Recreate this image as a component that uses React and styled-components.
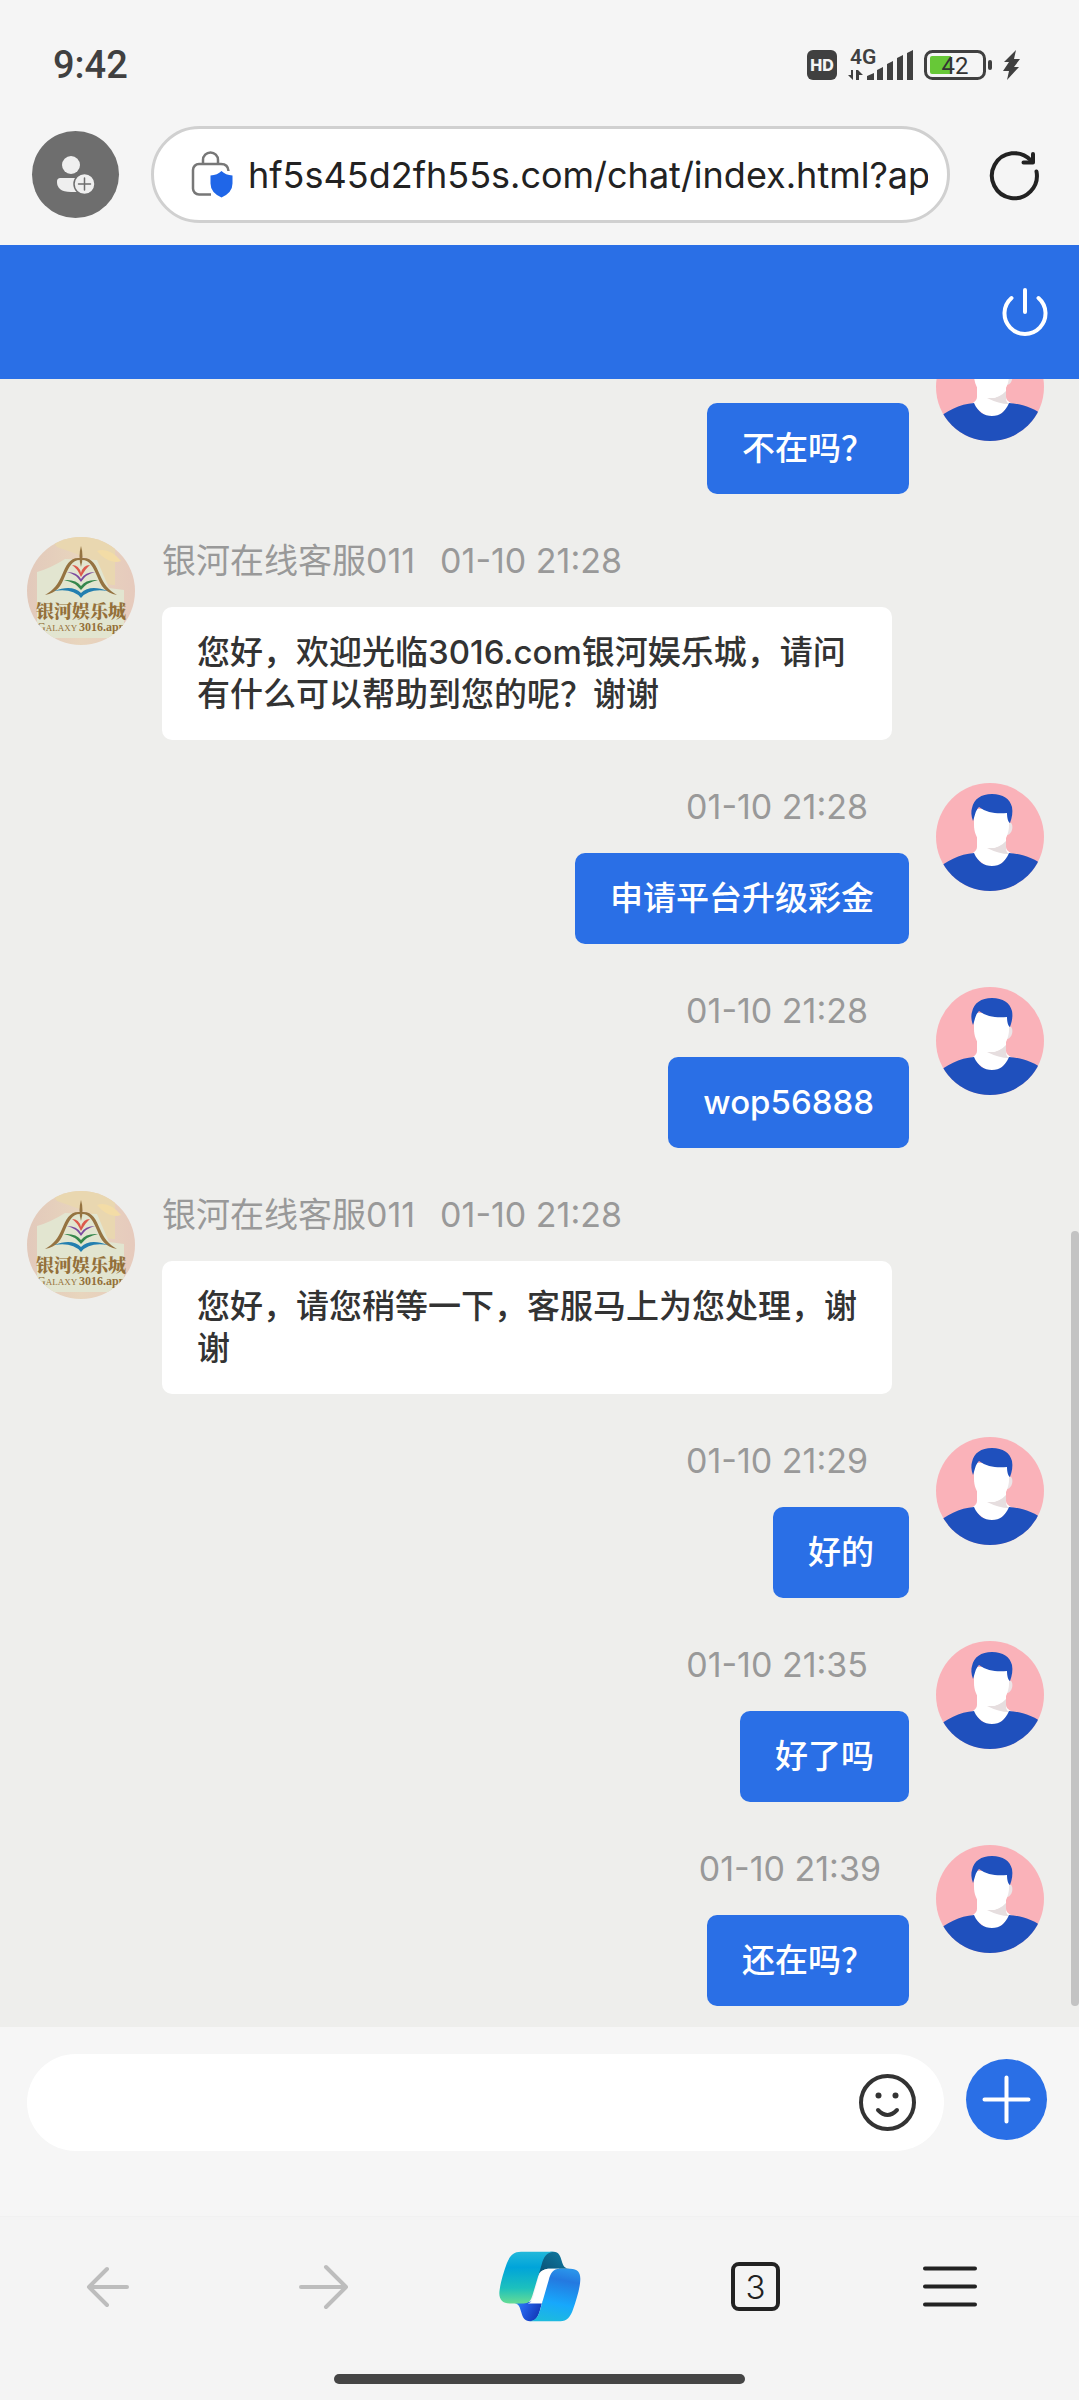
import { styled, createGlobalStyle } from 'styled-components';

const GlobalStyle = createGlobalStyle`
  * {
    box-sizing: border-box;
  }
  body {
    margin: 0;
    background-color: #f5f5f5;
    font-family: Inter, "Noto Sans CJK SC", sans-serif;
  }
  button {
    display: flex;
    align-items: center;
    justify-content: center;
    padding: 0;
    border: none;
    background: none;
    color: inherit;
    cursor: pointer;
  }
  svg {
    display: block;
    flex-shrink: 0;
    overflow: visible;
  }
`;

const Screen = styled.div`
  display: flex;
  flex-direction: column;
  height: 100vh;
`;

// ---------- phone status bar ----------
const StatusBar = styled.div`
  display: flex;
  align-items: center;
  justify-content: space-between;
  height: 126px;
  padding: 3px 59px 0 53px;
  color: #404040;
`;

const Clock = styled.time`
  font-family: Roboto, sans-serif;
  font-size: 38px;
  font-weight: 500;
`;

const StatusIcons = styled.div`
  display: flex;
  align-items: center;
  gap: 11px;
`;

// ---------- browser address bar ----------
const AddressBar = styled.div`
  display: flex;
  align-items: center;
  padding: 0 40px 22px 32px;
`;

const ProfileButton = styled.button`
  flex-shrink: 0;
  width: 87px;
  height: 87px;
  margin-right: 32px;
  border-radius: 50%;
  background-color: #6e6e6e !important;
`;

const UrlPill = styled.label`
  display: flex;
  flex: 1;
  align-items: center;
  gap: 14px;
  min-width: 0;
  height: 97px;
  margin-right: 40px;
  padding: 0 19px 0 36px;
  border: 3px solid #d0d0d0;
  border-radius: 49px;
  background-color: #fff;
`;

const UrlInput = styled.input`
  flex: 1;
  min-width: 0;
  padding: 0;
  border: none;
  outline: none;
  background: none;
  color: #222;
  font-family: inherit;
  font-size: 36px;
`;

// ---------- chat ----------
const ChatHeader = styled.header`
  display: flex;
  align-items: center;
  justify-content: flex-end;
  height: 134px;
  padding-right: 31px;
  background-color: #2a6fe6;
  color: #fff;
`;

const ChatArea = styled.main`
  position: relative;
  display: flex;
  flex: 1;
  min-height: 0;
  background-color: #eeeeec;
`;

// column-reverse keeps the list scrolled to the newest message
const ChatScroller = styled.div`
  display: flex;
  flex: 1;
  flex-direction: column-reverse;
  overflow-y: auto;
  scrollbar-width: none;
`;

const MessageList = styled.ul`
  display: flex;
  flex-direction: column;
  gap: 43px;
  margin: 0;
  padding: 0 35px 21px 27px;
  list-style: none;
`;

const ScrollThumb = styled.div`
  position: absolute;
  right: 0;
  bottom: 21px;
  width: 8px;
  height: 47%;
  border-radius: 4px;
  background-color: #c3c3c3;
`;

const MessageRow = styled.li`
  display: flex;
  flex-direction: ${({ $mine }) => ($mine ? 'row-reverse' : 'row')};
  align-items: flex-start;
  gap: 27px;
`;

const MessageBody = styled.div`
  display: flex;
  flex: 1;
  flex-direction: column;
  align-items: ${({ $mine }) => ($mine ? 'flex-end' : 'flex-start')};
  gap: 22px;
  padding-right: ${({ $mine }) => ($mine ? '0' : '152px')};
`;

const Meta = styled.div`
  display: flex;
  gap: 25px;
  min-height: 48px;
  padding-right: ${({ $mine, $latest }) => ($mine ? ($latest ? '28px' : '41px') : '0')};
  color: #999;
  font-size: 34px;
  line-height: 48px;
`;

const Bubble = styled.p`
  margin: 0;
  padding: 24px 35px 25px;
  border-radius: 10px;
  background-color: ${({ $mine }) => ($mine ? '#2a6fe6' : '#fff')};
  color: ${({ $mine }) => ($mine ? '#fff' : '#333')};
  font-size: 33px;
  font-weight: 500;
  line-height: 42px;
`;

// ---------- composer ----------
const Composer = styled.form`
  display: flex;
  align-items: center;
  gap: 22px;
  padding: 27px 32px 65px 27px;
  background-color: #f6f6f6;
`;

const InputPill = styled.div`
  display: flex;
  flex: 1;
  align-items: center;
  min-width: 0;
  height: 97px;
  padding: 0 28px 0 40px;
  border-radius: 49px;
  background-color: #fff;
`;

const MessageInput = styled.input`
  flex: 1;
  min-width: 0;
  border: none;
  outline: none;
  background: none;
  font-family: inherit;
  font-size: 33px;
`;

// ---------- browser bottom bar ----------
const BottomBar = styled.nav`
  display: grid;
  grid-template-columns: 5fr 5fr 5fr 5fr 4fr;
  height: 140px;
  padding-right: 43px;
  border-top: 1px solid #f1f1f1;
  background-color: #f4f4f4;
  color: #222;
`;

const TabCount = styled.span`
  display: flex;
  align-items: center;
  justify-content: center;
  width: 49px;
  height: 49px;
  border: 4px solid #222;
  border-radius: 8px;
  font-family: Inter, sans-serif;
  font-size: 33px;
  font-weight: 300;
  line-height: 40px;
`;

const HomeIndicator = styled.div`
  padding: 18px 0 16px;
  background-color: #f4f4f4;

  &::before {
    content: '';
    display: block;
    width: 38%;
    height: 10px;
    margin: 0 auto;
    border-radius: 5px;
    background-color: #454545;
  }
`;

// ---------- icons ----------
function HdIcon() {
  return (
    <svg width="30" height="30" viewBox="0 0 30 30">
      <rect width="30" height="30" rx="6" fill="#404040" />
      <text x="15" y="21" textAnchor="middle" fontFamily="Inter" fontSize="16" fontWeight="800" fill="#f5f5f5">HD</text>
    </svg>
  );
}

function SignalIcon() {
  return (
    <svg width="65" height="32" viewBox="0 0 65 32" fill="#404040">
      <text x="2" y="15" fontFamily="Roboto" fontSize="21" fontWeight="600">4G</text>
      <path d="M5 21v10L0 26h3v-5zM8 31V21h2l5 5h-4v5zM19 31v-4l7-3v7zM29 31V21l6-3v13zM39 31V15l6-3v19zM49 31V9l6-3v25zM59 31V4l6-3v30z" />
    </svg>
  );
}

function BatteryIcon() {
  return (
    <svg width="68" height="30" viewBox="0 0 68 30">
      <rect x="1.500" y="1.500" width="59" height="27" rx="7" fill="none" stroke="#404040" strokeWidth="3" />
      <path d="M8 6h19v18H8a2 2 0 0 1-2-2V8a2 2 0 0 1 2-2z" fill="#67c837" />
      <rect x="64" y="10" width="4" height="10" rx="2" fill="#404040" />
      <text x="31" y="24" textAnchor="middle" fontFamily="Roboto" fontSize="24" fill="#333">42</text>
    </svg>
  );
}

function BoltIcon() {
  return (
    <svg width="17" height="30" viewBox="0 0 17 30" fill="#404040">
      <path d="M13 0 1 12h5l-6 9h6l-2 9 12-13h-5l6-8h-6z" />
    </svg>
  );
}

function AddPersonIcon() {
  return (
    <svg width="39" height="39" viewBox="0 0 39 39">
      <circle cx="15" cy="10" r="9" fill="#efefef" />
      <path d="M5 23h20v14H15C5 37 1 33 1 27c0-3 1-4 4-4z" fill="#efefef" />
      <circle cx="28.500" cy="29" r="10.500" fill="#efefef" stroke="#6e6e6e" strokeWidth="1.500" />
      <path d="M28.500 23v12M22.500 29h12" stroke="#6e6e6e" strokeWidth="1.500" strokeLinecap="round" />
    </svg>
  );
}

function SiteSecurityIcon() {
  return (
    <svg width="44" height="48" viewBox="0 0 44 48">
      <path
        d="M13 12V9a7.500 7.500 0 0 1 15 0v3M21 43.500H9a6 6 0 0 1-6-6V19a6 6 0 0 1 6-6h22q7 0 7.500 7"
        fill="none"
        stroke="#777"
        strokeWidth="2.500"
      />
      <path d="M31.500 20q4 4 11 4.500v8q0 9-11 14-11-5-11-14v-8q7-.5 11-4.500z" fill="#1f66e8" />
    </svg>
  );
}

function ReloadIcon() {
  return (
    <svg width="49" height="50" viewBox="0 0 49 50" fill="none" stroke="#222" strokeWidth="4" strokeLinecap="round">
      <path d="M46.500 21.500A22.500 22.500 0 1 1 41 10.500" />
      <path d="M43 4v8.500h-9.500" strokeLinejoin="round" />
    </svg>
  );
}

function PowerIcon() {
  return (
    <svg width="46" height="50" viewBox="0 0 46 50" fill="none" stroke="#fff" strokeWidth="4" strokeLinecap="round">
      <path d="M23 3v22M9.500 11a20.500 20.500 0 1 0 27 0" />
    </svg>
  );
}

function SmileIcon() {
  return (
    <svg width="57" height="57" viewBox="0 0 57 57" fill="none" stroke="#333" strokeWidth="4" strokeLinecap="round">
      <circle cx="28.500" cy="28.500" r="26.500" />
      <path d="M19 36q9.500 10 19 0" />
      <circle cx="19.500" cy="21.500" r="3" fill="#333" stroke="none" />
      <circle cx="36.500" cy="21.500" r="3" fill="#333" stroke="none" />
    </svg>
  );
}

function PlusIcon() {
  return (
    <svg width="81" height="97" viewBox="0 0 81 97">
      <circle cx="40.500" cy="45.500" r="40.500" fill="#2a6fe6" />
      <path d="M40.500 23.500v44M18.500 45.500h44" stroke="#fff" strokeWidth="4" strokeLinecap="round" />
    </svg>
  );
}

function BackIcon() {
  return (
    <svg width="42" height="42" viewBox="0 0 42 42" fill="none" stroke="#bdbdbd" strokeWidth="4" strokeLinecap="round" strokeLinejoin="round">
      <path d="M40 21H2M20 3 2 21l18 18" />
    </svg>
  );
}

function ForwardIcon() {
  return (
    <svg width="49" height="46" viewBox="0 0 49 46" fill="none" stroke="#bdbdbd" strokeWidth="4" strokeLinecap="round" strokeLinejoin="round">
      <path d="M2 23h45M27 3l20 20-20 20" />
    </svg>
  );
}

function MenuIcon() {
  return (
    <svg width="54" height="41" viewBox="0 0 54 41" stroke="#222" strokeWidth="4" strokeLinecap="round">
      <path d="M2 2.500h50M2 20.500h50M2 38.500h50" />
    </svg>
  );
}

function CopilotIcon() {
  return (
    <svg width="82" height="71" viewBox="26 34 246 212">
      <defs>
        <linearGradient id="leftBand" x1="0" y1="0" x2="0" y2="1">
          <stop offset="0" stopColor="#22b8da" />
          <stop offset="0.3" stopColor="#00a4da" />
          <stop offset="0.7" stopColor="#1cc0bd" />
          <stop offset="1" stopColor="#66dc94" />
        </linearGradient>
        <linearGradient id="rightBand" x1="0.6" y1="0" x2="0.4" y2="1">
          <stop offset="0" stopColor="#2a93ea" />
          <stop offset="0.2" stopColor="#2479e0" />
          <stop offset="0.65" stopColor="#17a8fc" />
          <stop offset="1" stopColor="#1dbade" />
        </linearGradient>
        <linearGradient id="topFold" x1="1" y1="0" x2="0" y2="1">
          <stop offset="0" stopColor="#127fa6" />
          <stop offset="1" stopColor="#084c70" />
        </linearGradient>
        <linearGradient id="bottomFold" x1="0" y1="0" x2="1" y2="0.4">
          <stop offset="0" stopColor="#2090f0" />
          <stop offset="0.4" stopColor="#2563ea" />
          <stop offset="1" stopColor="#1238b8" />
        </linearGradient>
      </defs>
      <path d="M182 36h8c15 0 20 13 24 27 4 15 9 24 25 24h-58c-20 0-32 6-38 21 2-38 14-72 39-72z" fill="url(#topFold)" />
      <path d="M72 191c14 0 17 13 21 27 4 15 10 26 26 26 17 0 24-13 30-33l8-30z" fill="url(#bottomFold)" />
      <path d="M207 87h-30c-16 0-26 7-31 23l-17 60c-4 14-8 21-22 21h48l26-80z" fill="#fff" />
      <path d="M92 36h98c-21 2-30 16-36 38l-28 94c-5 16-11 23-26 23H58c-21 0-31-12-31-30 0-18 11-59 22-89 9-24 20-36 43-36z" fill="url(#leftBand)" />
      <path d="M207 87h33c21 0 30 11 30 30 0 24-11 61-22 92-8 23-18 35-38 35h-91c16-2 24-13 30-33l26-90c6-22 14-34 32-34z" fill="url(#rightBand)" />
    </svg>
  );
}

function VisitorAvatar() {
  return (
    <svg width="108" height="108" viewBox="0 0 108 108" role="img" aria-label="我">
      <clipPath id="visitorClip">
        <circle cx="54" cy="54" r="54" />
      </clipPath>
      <g clipPath="url(#visitorClip)">
        <rect width="108" height="108" fill="#fab2b9" />
        <path d="M41 52h29v12q0 4 7 7L56 88 35 71q6-3 6-7z" fill="#fff" />
        <path d="M70 58v7q0 4 3 6-10 0-22-6 12 1 19-7z" fill="#e6dedf" />
        <path d="M0 88C9 78 24 71 38 70c4 9 10 13 18 13s13-4 17-13c14 1 28 6 37 15v25H0z" fill="#1f50bd" />
        <path d="M72 40c6-3 6 11-1 12z" fill="#ece4e6" />
        <path d="M38 26h35v16c0 13-8 23-17 23s-18-10-18-23z" fill="#fff" />
        <path d="M37 38c-2-5-2-10-1-13 2-9 9-14 20-14s18 5 20 13c1 5 0 11-2 16-2-1-3-5-3-10-10 1-20 0-28-6-4 4-4 9-6 14z" fill="#1f50bd" />
      </g>
    </svg>
  );
}

function AgentAvatar() {
  return (
    <svg width="108" height="108" viewBox="0 0 108 108" role="img" aria-label="银河娱乐城">
      <defs>
        <clipPath id="agentClip">
          <circle cx="54" cy="54" r="54" />
        </clipPath>
        <linearGradient id="agentSky" x1="0" y1="0" x2="1" y2="0">
          <stop offset="0" stopColor="#e2c9bb" />
          <stop offset="0.5" stopColor="#e8d5bd" />
          <stop offset="1" stopColor="#e6cabd" />
        </linearGradient>
      </defs>
      <g clipPath="url(#agentClip)">
        <rect width="108" height="108" fill="url(#agentSky)" />
        <path d="M22 0h66v48c-9 1-10-6-16-8L64 22 30 10z" fill="#e9d7b0" />
        <path d="M70 14q12-4 24 10-12 4-24-10z" fill="#f3dca6" />
        <path d="M10 35q14-4 28-13l32 1 12 28 15 2v48H10z" fill="#e2e5d0" />
        <g fill="#957341">
          <path d="M54 9q3 10 0 21-3-11 0-21z" />
          <path d="M53 21c-10-1-14 7-18 17-4 9-8 15-17 20 12-2 16-9 20-19 4-9 7-16 15-16z" />
          <path d="M55 21c10-1 14 7 18 17 4 9 8 15 17 20-12-2-16-9-20-19-4-9-7-16-15-16z" />
        </g>
        <path d="M45 28q7 0 9 8 2-8 9-8-4 3-9 12-4-9-9-12z" fill="#dc5a4c" />
        <path d="M40 35q10 0 14 7 4-7 14-7-9 2-14 10-5-8-14-10z" fill="#7b4c9f" />
        <path d="M37 43q12-1 17 6 5-7 17-6-11 2-17 10-6-8-17-10z" fill="#35874c" />
        <path d="M27 54q18-7 27 2 9-9 27-2-19-3-27 7-8-10-27-7z" fill="#237fb0" />
        <text x="54" y="81" textAnchor="middle" fontFamily="Noto Serif CJK SC, Noto Sans CJK SC" fontSize="18" fontWeight="900" fill="#94703a">银河娱乐城</text>
        <text x="10" y="94" fontFamily="Liberation Serif" fontSize="12" fill="#94703a">
          G<tspan fontSize="9">ALAXY</tspan>
        </text>
        <text x="52" y="94" fontFamily="Liberation Serif" fontSize="12" fontWeight="700" fill="#94703a">3016.app</text>
      </g>
    </svg>
  );
}

const messages = [
  { id: 1, mine: true, text: '不在吗？' },
  { id: 2, mine: false, time: '01-10 21:28', text: '您好，欢迎光临3016.com银河娱乐城，请问有什么可以帮助到您的呢？谢谢' },
  { id: 3, mine: true, time: '01-10 21:28', text: '申请平台升级彩金' },
  { id: 4, mine: true, time: '01-10 21:28', text: 'wop56888' },
  { id: 5, mine: false, time: '01-10 21:28', text: '您好，请您稍等一下，客服马上为您处理，谢谢' },
  { id: 6, mine: true, time: '01-10 21:29', text: '好的' },
  { id: 7, mine: true, time: '01-10 21:35', text: '好了吗' },
  { id: 8, mine: true, time: '01-10 21:39', text: '还在吗？' },
];

function Message({ mine, latest, time, text }) {
  return (
    <MessageRow $mine={mine}>
      {mine ? <VisitorAvatar /> : <AgentAvatar />}
      <MessageBody $mine={mine}>
        <Meta $mine={mine} $latest={latest}>
          {!mine && <span>银河在线客服011</span>}
          {time && <time>{time}</time>}
        </Meta>
        <Bubble $mine={mine}>{text}</Bubble>
      </MessageBody>
    </MessageRow>
  );
}

export default function App() {
  return (
    <Screen lang="zh-CN">
      <GlobalStyle />
      <StatusBar>
        <Clock>9:42</Clock>
        <StatusIcons>
          <HdIcon />
          <SignalIcon />
          <BatteryIcon />
          <BoltIcon />
        </StatusIcons>
      </StatusBar>

      <AddressBar>
        <ProfileButton type="button" aria-label="登录">
          <AddPersonIcon />
        </ProfileButton>
        <UrlPill>
          <SiteSecurityIcon />
          <UrlInput type="text" aria-label="网址" defaultValue="hf5s45d2fh55s.com/chat/index.html?ap" />
        </UrlPill>
        <button type="button" aria-label="刷新">
          <ReloadIcon />
        </button>
      </AddressBar>

      <ChatHeader>
        <button type="button" aria-label="结束对话">
          <PowerIcon />
        </button>
      </ChatHeader>

      <ChatArea>
        <ChatScroller>
          <MessageList>
            {messages.map((message, index) => (
              <Message key={message.id} {...message} latest={index === messages.length - 1} />
            ))}
          </MessageList>
        </ChatScroller>
        <ScrollThumb />
      </ChatArea>

      <Composer onSubmit={(event) => event.preventDefault()}>
        <InputPill>
          <MessageInput type="text" aria-label="输入消息" />
          <button type="button" aria-label="表情">
            <SmileIcon />
          </button>
        </InputPill>
        <button type="button" aria-label="更多">
          <PlusIcon />
        </button>
      </Composer>

      <BottomBar>
        <button type="button" aria-label="后退">
          <BackIcon />
        </button>
        <button type="button" aria-label="前进">
          <ForwardIcon />
        </button>
        <button type="button" aria-label="Copilot">
          <CopilotIcon />
        </button>
        <button type="button" aria-label="标签页">
          <TabCount>3</TabCount>
        </button>
        <button type="button" aria-label="菜单">
          <MenuIcon />
        </button>
      </BottomBar>
      <HomeIndicator />
    </Screen>
  );
}
